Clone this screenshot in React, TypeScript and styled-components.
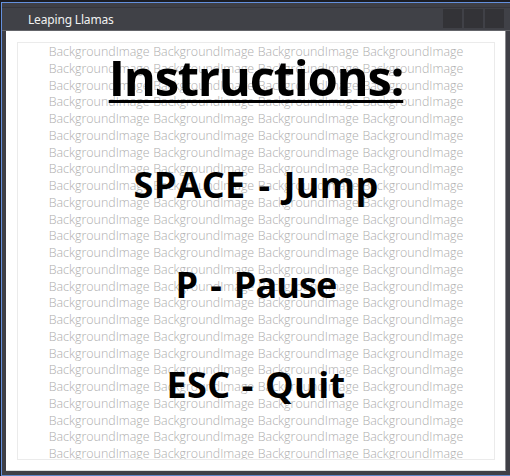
import React from "react";
import styled, { createGlobalStyle } from "styled-components";

const GlobalStyle = createGlobalStyle`
  * { box-sizing: border-box; }
  html, body { margin: 0; padding: 0; background: #1b1c22; }
  body { overflow: hidden; }
`;

const Desktop = styled.div`
  width: 510px;
  height: 476px;
  padding: 2px 0 0 1px;
  background: #1c1d24;
  font-family: "Open Sans", "Noto Sans", sans-serif;
`;

const Window = styled.div`
  display: flex;
  flex-direction: column;
  width: 510px;
  height: 474px;
  border: 1px solid #6490dd;
  border-bottom-color: #5f86c8;
  background: #3f3f46;
`;

const TitleBar = styled.header`
  display: flex;
  align-items: center;
  justify-content: space-between;
  height: 28px;
  flex: none;
  padding: 4px 6px 0 26px;
  border-bottom: 1px solid #64656a;
  background: linear-gradient(#3f3f45 0 4px, #35353b 4px 5px, #404147 5px);
`;

const Title = styled.span`
  margin-top: 2px;
  font-family: "Noto Sans", sans-serif;
  font-size: 12px;
  line-height: 16px;
  letter-spacing: -0.17px;
  color: #f1f1f1;
  white-space: nowrap;
`;

const Controls = styled.div`
  display: flex;
  gap: 2px;
`;

const Control = styled.span`
  width: 19px;
  height: 19px;
  background: #333337;
`;

const Client = styled.main`
  display: flex;
  height: 440px;
  margin: 0 4px 0 4px;
  padding: 11px 10px 10px 11px;
  border: 0 solid #8a8a8e;
  border-right-width: 1px;
  border-bottom: 1px solid #dcdedc;
  background: #fff;
`;

const Stage = styled.section`
  position: relative;
  flex: 1;
  overflow: hidden;
  border: 1px solid #ebebeb;
`;

const Backdrop = styled.div`
  display: flex;
  flex-direction: column;
  align-items: center;
`;

const BackdropRow = styled.div`
  height: 16.75px;
  line-height: 17px;
  font-size: 12.4px;
  font-weight: 300;
  letter-spacing: 0.02px;
  word-spacing: 0.4px;
  color: #aeaeae;
  white-space: nowrap;
`;

const Overlay = styled.div`
  position: absolute;
  inset: 0;
  display: flex;
  flex-direction: column;
  align-items: center;
  color: #000;
  font-weight: 700;
  white-space: nowrap;
`;

const Heading = styled.h1`
  margin: 0;
  font-size: 49px;
  line-height: 68px;
  letter-spacing: -1.25px;
  text-decoration: underline;
  text-decoration-thickness: 3px;
  text-underline-offset: 4px;
  text-decoration-skip-ink: none;
`;

const Command = styled.p<{ $gap: number; $spacing: number; $words: number }>`
  margin: ${(p) => p.$gap}px 0 0;
  font-size: 36px;
  line-height: 48px;
  letter-spacing: ${(p) => p.$spacing}px;
  word-spacing: ${(p) => p.$words}px;
`;

const commands = [
  { text: "SPACE - Jump", gap: 50, spacing: 0.3, words: 3.5 },
  { text: "P - Pause", gap: 52, spacing: -0.9, words: 4.5 },
  { text: "ESC - Quit", gap: 52, spacing: 0.4, words: 1.5 },
];

const rowText = Array(4).fill("BackgroundImage").join(" ");

export default function App() {
  return (
    <>
      <GlobalStyle />
      <Desktop>
        <Window>
          <TitleBar>
            <Title>Leaping Llamas</Title>
            <Controls>
              <Control />
              <Control />
              <Control />
            </Controls>
          </TitleBar>
          <Client>
            <Stage>
              <Backdrop aria-hidden="true">
                {Array.from({ length: 25 }, (_, i) => (
                  <BackdropRow key={i}>{rowText}</BackdropRow>
                ))}
              </Backdrop>
              <Overlay>
                <Heading>Instructions:</Heading>
                {commands.map((c) => (
                  <Command
                    key={c.text}
                    $gap={c.gap}
                    $spacing={c.spacing}
                    $words={c.words}
                  >
                    {c.text}
                  </Command>
                ))}
              </Overlay>
            </Stage>
          </Client>
        </Window>
      </Desktop>
    </>
  );
}
